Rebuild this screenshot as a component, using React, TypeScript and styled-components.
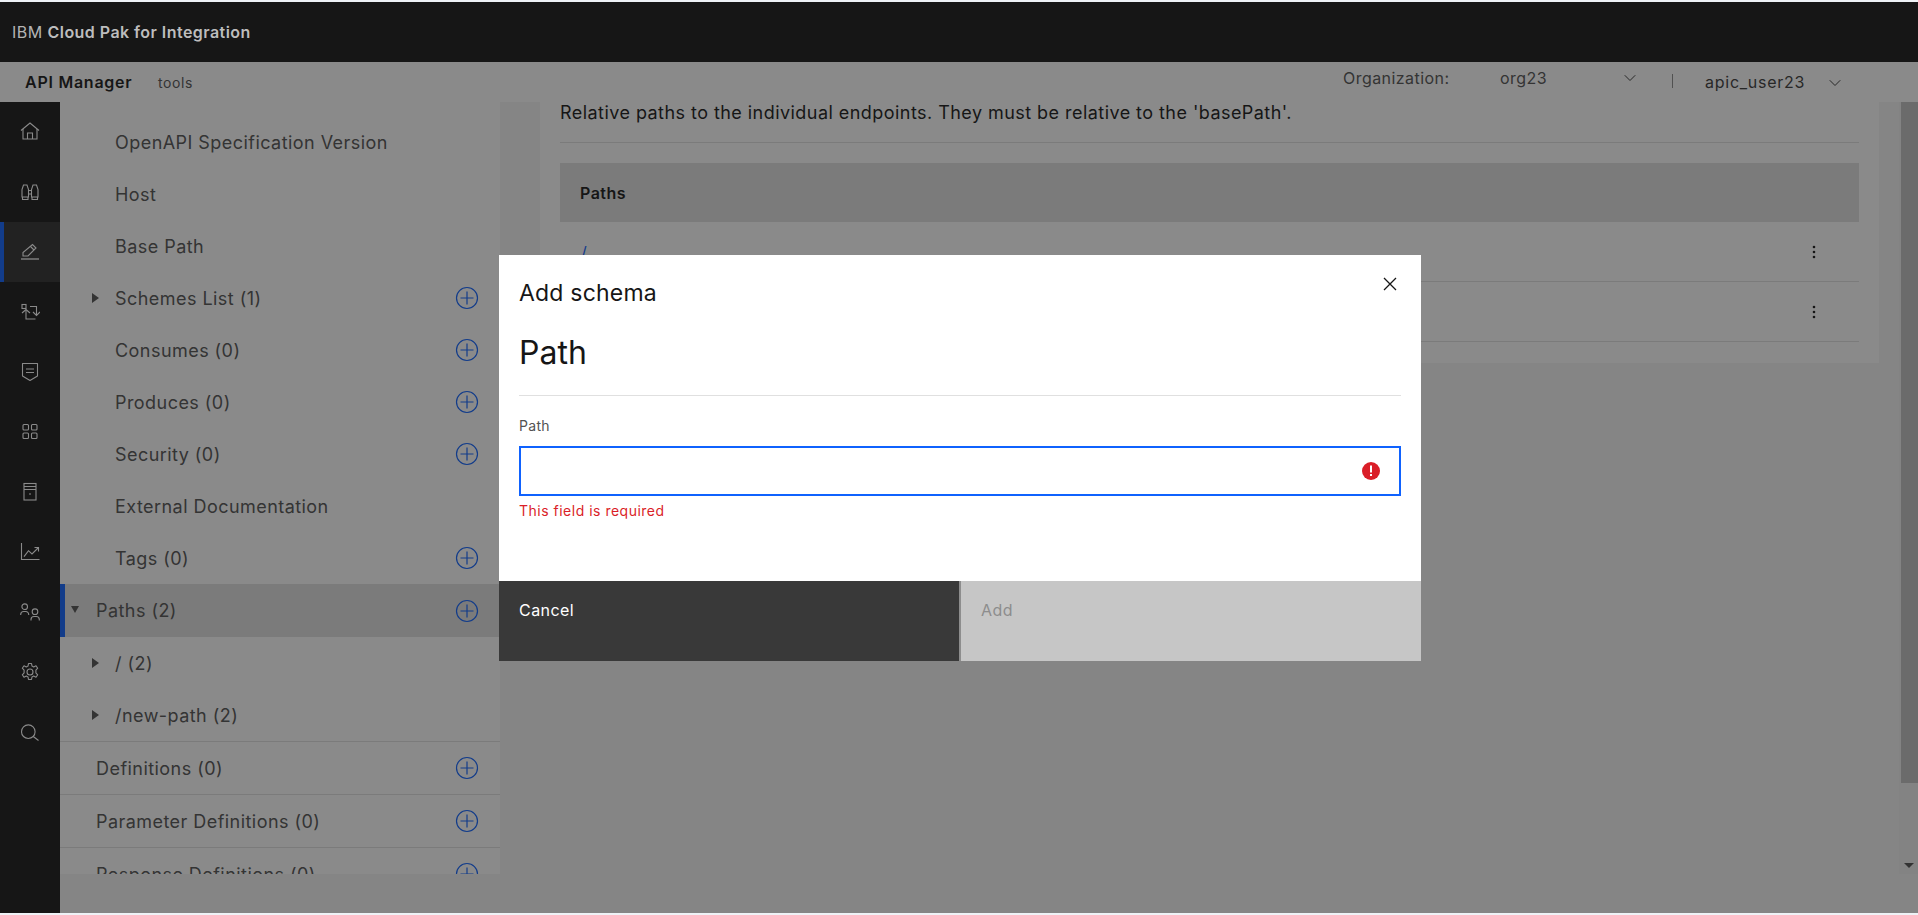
import React from 'react'
import styled, { createGlobalStyle } from 'styled-components'
import { ChevronDown } from 'lucide-react'

const font = `Inter, "Noto Sans", Arial, sans-serif`

const GlobalStyle = createGlobalStyle`
    html, body {
        margin: 0;
        padding: 0;
        height: 100%;
        overflow: hidden;
        background: #eef2f6;
        font-family: ${font};
        letter-spacing: 0.45px;
    }
    * { box-sizing: border-box; }
`

const railIcons: React.ReactNode[] = [
    <><path d="M1 8.5 10 1l9 7.5" /><path d="M3 7v10h14V7" /><path d="M7.5 17v-6h5v6" /></>,
    <><path d="M2 15V7.5L3.5 3H7l1.500 4.500V15z" /><path d="M18 15V7.5L16.500 3H13l-1.500 4.500V15z" /><path d="M8.500 8.500h3M8.500 12h3" /><path d="M2.500 15v2.500H8V15M12 15v2.500h5.500V15" /></>,
    <><path d="M3 14v-3.500L12.500 2.500 16 6l-8 8z" /><path d="m10.500 4.500 3.500 3.500" /><path d="M1 17h18" strokeWidth="1.300" /></>,
    <><rect x="2" y="2.500" width="4" height="4" /><path d="M10 4.500h6.500V13" /><path d="m13 10 3.500 3.500L20 10" /><path d="M2 11l4-3.500 4 3.500" /><path d="M6 8v9h9.500" /></>,
    <><path d="M2.500 1.500h15V14L10 18.500 2.500 14z" strokeLinejoin="round" /><path d="M6 7h8M6 10.500h8" /></>,
    <><rect x="3" y="2.500" width="5.500" height="5.500" rx="1" /><rect x="11.500" y="2.500" width="5.500" height="5.500" rx="1" /><rect x="3" y="11" width="5.500" height="5.500" rx="1" /><rect x="11.500" y="11" width="5.500" height="5.500" rx="1" /></>,
    <><rect x="4" y="1.500" width="12" height="16.500" /><path d="M4 4.500h12M4 7.500h12" /><path d="M9 12h2" /></>,
    <><path d="M1.500 1v16.500h18" /><path d="m4 14.700 4.500-6 3.500 3.300 6-6" /><path d="M14.500 5.500h4v4" /></>,
    <><circle cx="4.700" cy="4.700" r="2.800" /><path d="M.7 13v-.5a3 3 0 0 1 3-3h2a3 3 0 0 1 3 3v.5" /><circle cx="15" cy="9.700" r="2.800" /><path d="M11 18.500v-1a3 3 0 0 1 3-3h2.300a3 3 0 0 1 3 3v1" /></>,
    <><circle cx="10" cy="10" r="3" /><path d="M8.500 1.500h3l.5 2.600 1.700.8 2.300-1.200 1.700 2.500-1.800 1.900v2.800l1.800 1.900-1.700 2.500-2.300-1.200-1.700.8-.5 2.600h-3l-.5-2.600-1.700-.8-2.300 1.200-1.700-2.500 1.800-1.900V8.100L2.300 6.200 4 3.700l2.300 1.200 1.700-.8z" strokeLinejoin="round" /></>,
    <><circle cx="8.300" cy="9.700" r="6.800" /><path d="m13.300 14.500 5.200 4" /></>,
]

type TreeItem = { label: string; level?: 'top' | 'nested'; caret?: 'right' | 'down'; add?: boolean; selected?: boolean; ruled?: boolean }

const treeItems: TreeItem[] = [
    { label: 'OpenAPI Specification Version', level: 'nested' },
    { label: 'Host', level: 'nested' },
    { label: 'Base Path', level: 'nested' },
    { label: 'Schemes List (1)', level: 'nested', caret: 'right', add: true },
    { label: 'Consumes (0)', level: 'nested', add: true },
    { label: 'Produces (0)', level: 'nested', add: true },
    { label: 'Security (0)', level: 'nested', add: true },
    { label: 'External Documentation', level: 'nested' },
    { label: 'Tags (0)', level: 'nested', add: true },
    { label: 'Paths (2)', caret: 'down', add: true, selected: true },
    { label: '/ (2)', level: 'nested', caret: 'right' },
    { label: '/new-path (2)', level: 'nested', caret: 'right', ruled: true },
    { label: 'Definitions (0)', add: true, ruled: true },
    { label: 'Parameter Definitions (0)', add: true, ruled: true },
    { label: 'Response Definitions (0)', add: true },
]

const AddIcon = () => (
    <svg width="24" height="24" viewBox="0 0 24 24" fill="none" stroke="#0f62fe" strokeWidth="1.2">
        <circle cx="12" cy="12" r="10.500" />
        <path d="M12 5.500v13M5.500 12h13" />
    </svg>
)

const Dots = () => (
    <svg width="4" height="14" viewBox="0 0 4 14" fill="#161616">
        <circle cx="2" cy="2" r="1.300" />
        <circle cx="2" cy="7" r="1.300" />
        <circle cx="2" cy="12" r="1.300" />
    </svg>
)

export default function App() {
    return (
        <Shell>
            <GlobalStyle />
            <TopBar>
                <Brand>IBM <strong>Cloud Pak for Integration</strong></Brand>
            </TopBar>
            <SubBar>
                <Product>API Manager</Product>
                <Realm>tools</Realm>
                <OrgArea>
                    <OrgLabel>Organization:</OrgLabel>
                    <OrgValue>org23</OrgValue>
                    <OrgChevron><ChevronDown size={20} strokeWidth={1.2} /></OrgChevron>
                    <Separator />
                    <UserValue>apic_user23</UserValue>
                    <UserChevron><ChevronDown size={20} strokeWidth={1.2} /></UserChevron>
                </OrgArea>
            </SubBar>
            <Body>
                <Rail>
                    {railIcons.map((icon, i) => (
                        <RailItem key={i} $active={i === 2}>
                            <svg width="20" height="20" viewBox="0 0 20 20" fill="none" stroke="currentColor" strokeWidth="1.100">
                                {icon}
                            </svg>
                        </RailItem>
                    ))}
                </Rail>
                <Work>
                    <WorkRow>
                        <Tree>
                            {treeItems.map(item => (
                                <TreeRow key={item.label} $selected={item.selected} $ruled={item.ruled}>
                                    {item.caret && <Caret $down={item.caret === 'down'} />}
                                    <TreeLabel $nested={item.level === 'nested'}>{item.label}</TreeLabel>
                                    {item.add && <AddSlot><AddIcon /></AddSlot>}
                                </TreeRow>
                            ))}
                        </Tree>
                        <Content>
                            <Card>
                                <Description>Relative paths to the individual endpoints. They must be relative to the 'basePath'.</Description>
                                <TableHead>Paths</TableHead>
                                <TableRow><PathLink>/</PathLink><Dots /></TableRow>
                                <TableRow><PathLink>/new-path</PathLink><Dots /></TableRow>
                            </Card>
                            <ScrollColumn>
                                <ScrollTrack>
                                    <ScrollThumb />
                                    <ScrollArrow />
                                </ScrollTrack>
                            </ScrollColumn>
                        </Content>
                    </WorkRow>
                </Work>
            </Body>
            <Overlay>
                <Modal>
                    <ModalBody>
                        <ModalLabel>Add schema</ModalLabel>
                        <CloseButton>
                            <svg width="16" height="16" viewBox="0 0 16 16" fill="none" stroke="#161616" strokeWidth="1.300">
                                <path d="m2 2 12 12M14 2 2 14" />
                            </svg>
                        </CloseButton>
                        <ModalTitle>Path</ModalTitle>
                        <FieldLabel>Path</FieldLabel>
                        <InputBox>
                            <svg width="18" height="18" viewBox="0 0 18 18">
                                <circle cx="9" cy="9" r="9" fill="#da1e28" />
                                <path d="M8 3.500h2v7H8zM8 12h2v2H8z" fill="#fff" />
                            </svg>
                        </InputBox>
                        <ErrorText>This field is required</ErrorText>
                    </ModalBody>
                    <ModalFooter>
                        <CancelButton>Cancel</CancelButton>
                        <AddButton>Add</AddButton>
                    </ModalFooter>
                </Modal>
            </Overlay>
        </Shell>
    )
}

const Shell = styled.div`
    position: relative;
    margin-top: 2px;
    height: 911px;
    width: 1918px;
    display: flex;
    flex-direction: column;
    background: #f4f4f4;
    overflow: hidden;
`

const TopBar = styled.header`
    position: relative;
    z-index: 20;
    height: 60px;
    flex: none;
    display: flex;
    align-items: center;
    padding-left: 12px;
    background: #161616;
`

const Brand = styled.div`
    font-size: 16px;
    color: #b4b4b4;
    strong {
        font-weight: 600;
        color: #bdbdbd;
    }
`

const SubBar = styled.div`
    height: 40px;
    flex: none;
    display: flex;
    align-items: center;
    background: #fff;
`

const Product = styled.div`
    margin-left: 25px;
    font-size: 16px;
    font-weight: 600;
    letter-spacing: 0.75px;
    color: #161616;
    width: 133px;
`

const Realm = styled.div`
    font-size: 14px;
    letter-spacing: 0.6px;
    color: #525252;
`

const OrgArea = styled.div`
    margin-left: auto;
    display: flex;
    align-items: center;
    height: 100%;
    color: #393939;
    font-size: 16px;
    padding-right: 73px;
`

const OrgLabel = styled.span`
    width: 157px;
    color: #525252;
    margin-top: -8px;
`

const OrgValue = styled.span`
    width: 120px;
    color: #525252;
    margin-top: -8px;
`

const OrgChevron = styled.span`
    display: flex;
    margin-top: -8px;
    width: 52px;
`

const Separator = styled.span`
    width: 1px;
    height: 14px;
    background: #8d8d8d;
    margin: -2px 32px 0 0;
`

const UserValue = styled.span`
    width: 120px;
    letter-spacing: 0.75px;
    color: #393939;
`

const UserChevron = styled.span`
    display: flex;
    margin-top: 2px;
`

const Body = styled.div`
    flex: 1;
    display: flex;
    min-height: 0;
`

const Rail = styled.nav`
    width: 60px;
    flex: none;
    background: #161616;
`

const RailItem = styled.div<{ $active?: boolean }>`
    height: 60px;
    display: flex;
    align-items: center;
    justify-content: center;
    color: #fff;
    background: ${p => (p.$active ? '#2e2e2e' : 'transparent')};
    box-shadow: ${p => (p.$active ? 'inset 4px 0 0 #0f62fe' : 'none')};
`

const Work = styled.div`
    flex: 1;
    min-width: 0;
`

const WorkRow = styled.div`
    height: 772px;
    display: flex;
`

const Tree = styled.aside`
    width: 440px;
    flex: none;
    background: #fff;
    padding-top: 14px;
    overflow: hidden;
`

const TreeRow = styled.div<{ $selected?: boolean; $ruled?: boolean }>`
    position: relative;
    height: ${p => (p.$selected || p.$ruled ? 53 : 52)}px;
    display: flex;
    align-items: center;
    background: ${p => (p.$selected ? '#e0e0e0' : 'transparent')};
    box-shadow: ${p => (p.$selected ? 'inset 5px 0 0 #0f62fe' : 'none')};
    border-bottom: ${p => (p.$ruled ? '1px solid #e0e0e0' : 'none')};
`

const Caret = styled.span<{ $down?: boolean }>`
    position: absolute;
    width: 0;
    height: 0;
    ${p => (p.$down
        ? `left: 11px;
           border-left: 4.5px solid transparent;
           border-right: 4.5px solid transparent;
           border-top: 7px solid #525252;
           margin-top: -2px;`
        : `left: 32px;
           border-top: 5px solid transparent;
           border-bottom: 5px solid transparent;
           border-left: 7px solid #525252;`)}
`

const TreeLabel = styled.span<{ $nested?: boolean }>`
    padding-left: ${p => (p.$nested ? 55 : 36)}px;
    font-size: 18px;
    color: #525252;
    white-space: nowrap;
`

const AddSlot = styled.span`
    margin-left: auto;
    margin-right: 21px;
    display: flex;
`

const Content = styled.main`
    flex: 1;
    min-width: 0;
    display: flex;
    padding-left: 40px;
`

const Card = styled.section`
    width: 1339px;
    height: 261px;
    flex: none;
    background: #fff;
    padding: 0 20px;
`

const Description = styled.div`
    height: 41px;
    line-height: 22px;
    font-size: 18px;
    color: #161616;
    border-bottom: 1px solid #e0e0e0;
    margin-bottom: 20px;
`

const TableHead = styled.div`
    height: 59px;
    display: flex;
    align-items: center;
    padding-left: 20px;
    background: #e0e0e0;
    font-size: 16px;
    font-weight: 600;
    color: #161616;
`

const TableRow = styled.div`
    height: 60px;
    display: flex;
    align-items: center;
    justify-content: space-between;
    padding: 1px 43px 0 21px;
    border-bottom: 1px solid #e0e0e0;
`

const PathLink = styled.a`
    font-size: 16px;
    color: #0f62fe;
`

const ScrollColumn = styled.div`
    flex: 1;
    display: flex;
    justify-content: flex-end;
`

const ScrollTrack = styled.div`
    position: relative;
    width: 19px;
    height: 100%;
    background: #f1f1f1;
    display: flex;
    justify-content: flex-end;
`

const ScrollThumb = styled.div`
    width: 17px;
    height: 681px;
    background: #c1c1c1;
`

const ScrollArrow = styled.span`
    position: absolute;
    bottom: 6px;
    right: 4px;
    width: 0;
    height: 0;
    border-left: 5px solid transparent;
    border-right: 5px solid transparent;
    border-top: 5px solid #505050;
`

const Overlay = styled.div`
    position: absolute;
    inset: 0;
    z-index: 10;
    display: flex;
    align-items: center;
    justify-content: center;
    padding: 1px 0 0 2px;
    background: rgba(22, 22, 22, 0.5);
`

const Modal = styled.div`
    width: 922px;
    height: 406px;
    display: flex;
    flex-direction: column;
    background: #fff;
`

const ModalBody = styled.div`
    position: relative;
    flex: 1;
    padding: 24px 20px 0;
`

const ModalLabel = styled.div`
    font-size: 23px;
    line-height: 28px;
    letter-spacing: 0.2px;
    color: #161616;
`

const CloseButton = styled.span`
    position: absolute;
    top: 21px;
    right: 23px;
    display: flex;
`

const ModalTitle = styled.h2`
    margin: 23px 0 0;
    font-size: 32px;
    line-height: 46px;
    font-weight: 400;
    letter-spacing: 0;
    color: #161616;
    height: 66px;
    border-bottom: 1px solid #e0e0e0;
`

const FieldLabel = styled.div`
    margin-top: 22px;
    font-size: 14px;
    line-height: 16px;
    letter-spacing: 0.3px;
    color: #525252;
`

const InputBox = styled.div`
    margin-top: 12px;
    height: 50px;
    display: flex;
    align-items: center;
    justify-content: flex-end;
    padding-right: 19px;
    border: 2px solid #0f62fe;
    background: #fff;
`

const ErrorText = styled.div`
    margin-top: 6px;
    font-size: 14px;
    line-height: 18px;
    letter-spacing: 0.5px;
    color: #da1e28;
`

const ModalFooter = styled.div`
    height: 80px;
    flex: none;
    display: flex;
    background: #8d8d8d;
    gap: 2px;
`

const FooterButton = styled.div`
    padding: 18px 20px 0;
    font-size: 16px;
    line-height: 22px;
`

const CancelButton = styled(FooterButton)`
    flex: 0 0 460px;
    background: #393939;
    color: #fff;
`

const AddButton = styled(FooterButton)`
    flex: 1;
    background: #c6c6c6;
    color: #8d8d8d;
`
